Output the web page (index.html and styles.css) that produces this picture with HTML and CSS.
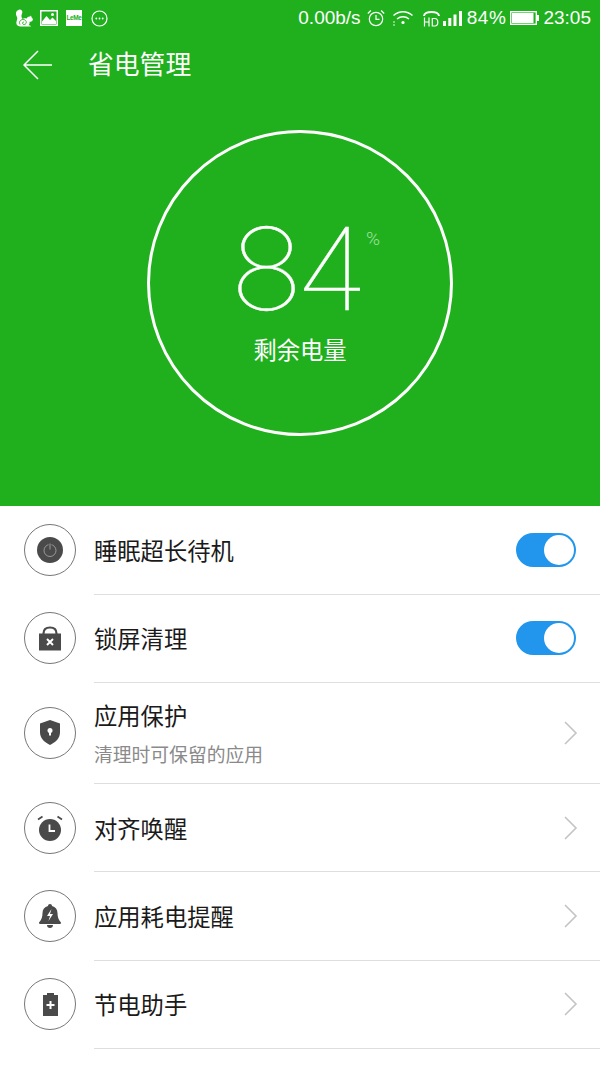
FILE: index.html
```html
<!DOCTYPE html>
<html lang="zh-CN">

<head>
    <meta charset="UTF-8">
    <meta name="viewport" content="width=device-width, initial-scale=1.0">
    <title>省电管理</title>
    <link rel="stylesheet" href="styles.css">
</head>

<body>
    <header class="hero">
        <div class="status-bar">
            <div class="status-left">
                <svg width="18" height="18" viewBox="0 0 18 18"><path fill="#fff" d="M4.500.5C2 1 .5 3 1 5.500c.3 1.600 1.300 2.500 1.300 4C2 11.500 1 12.800 1.500 15c.4 1.500 2 2.500 4 2.500H16c-.5-1-1.500-1.200-2.500-1.200 1-1 1.300-2.300 1-3.500 1.500.2 3-.5 3.300-2 .2-1-.5-1.800-1.300-2.500L16 6.500l-1 1c-1.500-.2-2.800.5-3.300 2C10 9 8.500 9.200 7.500 10 6.500 8 6 6.800 6.800 5.200 7.600 3.600 7.500 2.500 6.800 1.500 6.200.7 5.300.4 4.500.5z"/><path fill="none" stroke="#20b01e" stroke-width=".9" d="M5 15.500c-1.500-2.500.5-5 3-5s4 2 3 4c-.7 1.300-3 1.400-3.500 0-.3-1 .7-1.800 1.500-1.300"/></svg>
                <svg class="st-photo" width="18" height="16" viewBox="0 0 18 16"><path fill="#fff" fill-rule="evenodd" d="M0 0h18v16H0zM1.500 1.500v13h15v-13z"/><path fill="#fff" d="M2 14v-2.500L6.500 6l3.500 4 2.500-2.500L16 11v3z"/><circle cx="12.500" cy="4.500" r="1.500" fill="#fff"/></svg>
                <span class="st-leme">LeMe</span>
                <svg class="st-more" width="17" height="17" viewBox="0 0 17 17"><circle cx="8.500" cy="8.500" r="7.500" fill="none" stroke="#fff" stroke-width="1.200"/><circle cx="5.300" cy="8.500" r=".9" fill="#fff"/><circle cx="8.500" cy="8.500" r=".9" fill="#fff"/><circle cx="11.700" cy="8.500" r=".9" fill="#fff"/></svg>
            </div>
            <div class="status-right">
                <span class="st-text">0.00b/s</span>
                <svg class="st-alarm" width="18" height="18" viewBox="0 0 18 18"><circle cx="9" cy="10" r="6.700" fill="none" stroke="#fff" stroke-width="1.200"/><path fill="none" stroke="#fff" stroke-width="1.200" d="M9 6v4.300h3.500M.8 4.500 3.800 1.500M17.200 4.500l-3-3"/></svg>
                <svg class="st-wifi" width="20" height="16" viewBox="0 0 20 16"><path fill="none" stroke="#fff" stroke-width="1.500" d="M.5 5.500c5.500-5 13.500-5 19 0M4 9c3.500-3 8.500-3 12 0"/><circle cx="10" cy="12.500" r="1.600" fill="#fff"/><circle cx="1" cy="15" r=".8" fill="#fff"/><circle cx="1" cy="12" r=".8" fill="#fff"/></svg>
                <svg class="st-hd" width="17" height="17" viewBox="0 0 17 17"><path fill="none" stroke="#fff" stroke-width="2" d="M1 6c0-5.500 15-5.500 15 0"/><path fill="none" stroke="#fff" stroke-width="1.200" d="M1.500 7.500V16.500M6 7.500V16.500M1.500 12h4.500M9.300 8.500v7.500h2.500c4 0 4-7.500 0-7.500z"/></svg>
                <svg class="st-signal" width="19" height="15" viewBox="0 0 19 15"><path fill="#fff" d="M0 10h3v5H0zM5.300 7h3v8h-3zM10.500 3.500h3V15h-3zM16 0h3v15h-3z"/></svg>
                <span class="st-text st-pct">84%</span>
                <svg class="st-battery" width="29" height="14" viewBox="0 0 29 14"><path fill="#fff" d="M27 4h2v6h-2z"/><rect x=".7" y=".7" width="25.600" height="12.600" fill="none" stroke="#fff" stroke-width="1.400"/><rect x="2" y="2" width="21.500" height="10" fill="#fff"/></svg>
                <span class="st-text st-time">23:05</span>
            </div>
        </div>

        <div class="toolbar">
            <svg class="back" width="30" height="30" viewBox="0 0 30 30"><path fill="none" stroke="#fff" stroke-width="1.500" d="M15 1 1 15l14 14M1 15h28"/></svg>
            <h1>省电管理</h1>
        </div>

        <div class="gauge">
            <div class="gauge-num">
                <span class="num">84</span>
                <span class="pct">%</span>
            </div>
            <div class="gauge-label">剩余电量</div>
        </div>
    </header>

    <ul class="list">
        <li class="row">
            <span class="ic">
                <svg width="26" height="26" viewBox="0 0 26 26"><circle cx="13" cy="13" r="13" fill="#4a4a4a"/><circle cx="13" cy="13.500" r="6" fill="none" stroke="#9a9a9a" stroke-width="1"/><path d="M13 6v7" stroke="#4a4a4a" stroke-width="3"/><path d="M13 6.500v6" stroke="#9a9a9a" stroke-width="1"/></svg>
            </span>
            <div class="row-body">
                <span class="row-title">睡眠超长待机</span>
                <span class="toggle"><span class="knob"></span></span>
            </div>
        </li>
        <li class="row">
            <span class="ic">
                <svg width="22" height="25" viewBox="0 0 22 25"><path fill="none" stroke="#4a4a4a" stroke-width="2.200" d="M4.500 9V7.500C4.500 3.500 7 1.500 11 1.500s6.500 2 6.500 6V9"/><path fill="#4a4a4a" d="M0 7.500h22V24.500H0z"/><path stroke="#fff" stroke-width="2" d="m8 13 6 6M14 13l-6 6"/></svg>
            </span>
            <div class="row-body">
                <span class="row-title">锁屏清理</span>
                <span class="toggle"><span class="knob"></span></span>
            </div>
        </li>
        <li class="row row-tall">
            <span class="ic">
                <svg width="20" height="25" viewBox="0 0 20 25"><path fill="#4a4a4a" d="M10 0 20 3.500V12c0 6-4 10-10 13C4 22 0 18 0 12V3.500z"/><circle cx="10" cy="10.500" r="2.500" fill="#fff"/><path fill="#fff" d="M9 11h2v4.500H9z"/></svg>
            </span>
            <div class="row-body row-body-link">
                <div class="row-text">
                    <span class="row-title">应用保护</span>
                    <span class="row-sub">清理时可保留的应用</span>
                </div>
                <svg class="chev" width="14" height="24" viewBox="0 0 14 24"><path fill="none" stroke="#c4c4c4" stroke-width="1.600" d="m1 1 11 11L1 23"/></svg>
            </div>
        </li>
        <li class="row">
            <span class="ic">
                <svg width="26" height="26" viewBox="0 0 26 26"><circle cx="13" cy="15" r="11" fill="#4a4a4a"/><path fill="none" stroke="#4a4a4a" stroke-width="1.800" d="M1 4.500 5.500 1.500M25 4.500 20.500 1.500"/><path fill="none" stroke="#fff" stroke-width="1.800" d="M12.500 9.500V16H18"/></svg>
            </span>
            <div class="row-body row-body-link">
                <span class="row-title">对齐唤醒</span>
                <svg class="chev" width="14" height="24" viewBox="0 0 14 24"><path fill="none" stroke="#c4c4c4" stroke-width="1.600" d="m1 1 11 11L1 23"/></svg>
            </div>
        </li>
        <li class="row">
            <span class="ic">
                <svg width="22" height="24" viewBox="0 0 22 24"><path fill="#4a4a4a" d="M11 0c1.200 0 2 .8 2 2 3.500 1 5.500 3.500 5.500 7 0 4 1 7 3.500 9.500 0 1-.5 1.500-1.500 1.500h-19C.5 20 0 19.500 0 18.500 2.500 16 3.500 13 3.500 9c0-3.500 2-6 5.500-7 0-1.200.8-2 2-2zM8 21h6c0 1.800-1.200 3-3 3s-3-1.200-3-3z"/><path fill="#fff" d="m12.500 5-4.500 7h3l-1.500 5 4.500-7h-3z"/></svg>
            </span>
            <div class="row-body row-body-link">
                <span class="row-title">应用耗电提醒</span>
                <svg class="chev" width="14" height="24" viewBox="0 0 14 24"><path fill="none" stroke="#c4c4c4" stroke-width="1.600" d="m1 1 11 11L1 23"/></svg>
            </div>
        </li>
        <li class="row">
            <span class="ic">
                <svg width="15" height="23" viewBox="0 0 15 23"><path fill="#4a4a4a" d="M4 0h7v2h4v21H0V2h4z"/><path stroke="#fff" stroke-width="2" d="M7.500 8v8M3.500 12h8"/></svg>
            </span>
            <div class="row-body row-body-link">
                <span class="row-title">节电助手</span>
                <svg class="chev" width="14" height="24" viewBox="0 0 14 24"><path fill="none" stroke="#c4c4c4" stroke-width="1.600" d="m1 1 11 11L1 23"/></svg>
            </div>
        </li>
    </ul>
</body>

</html>
```

FILE: styles.css
```css
* {
    box-sizing: border-box;
}

html,
body {
    margin: 0;
    padding: 0;
}

body {
    width: 600px;
    height: 1066px;
    overflow: hidden;
    background-color: #fff;
    font-family: "Noto Sans CJK SC", "Liberation Sans", sans-serif;
}

.hero {
    height: 506px;
    background-color: #20b01e;
    color: #fff;
}

.status-bar {
    height: 36px;
    padding: 0 9px 0 15px;
    display: flex;
    justify-content: space-between;
    align-items: center;
}

.status-left {
    display: flex;
    align-items: center;
}

.st-photo {
    margin-left: 7px;
}

.st-leme {
    width: 16px;
    height: 16px;
    margin-left: 8px;
    background-color: #fff;
    color: #20b01e;
    font-family: "Liberation Sans", sans-serif;
    font-size: 6.500px;
    font-weight: bold;
    letter-spacing: -0.4px;
    line-height: 16px;
    text-align: center;
    white-space: nowrap;
}

.st-more {
    margin-left: 9px;
}

.status-right {
    display: flex;
    align-items: center;
}

.st-text {
    font-family: "Liberation Sans", sans-serif;
    font-size: 19px;
    line-height: 20px;
}

.st-alarm {
    margin-left: 6px;
}

.st-wifi {
    margin-left: 8px;
}

.st-hd {
    margin-left: 10px;
}

.st-signal {
    margin-left: 3px;
}

.st-pct {
    margin-left: 5px;
    letter-spacing: 0.6px;
}

.st-battery {
    margin-left: 4px;
}

.st-time {
    margin-left: 4px;
}

.toolbar {
    height: 58px;
    padding-left: 23px;
    display: flex;
    align-items: center;
}

.toolbar h1 {
    margin: 0 0 4px 35px;
    font-size: 25.800px;
    font-weight: 400;
    line-height: 34px;
}

.gauge {
    width: 306px;
    height: 306px;
    margin: 36px auto 0;
    border: 3px solid #fff;
    border-radius: 50%;
    display: flex;
    flex-direction: column;
    align-items: center;
}

.gauge-num {
    position: relative;
    margin-top: 78px;
    height: 116px;
}

.num {
    display: block;
    margin-right: 10px;
    font-family: Inter, sans-serif;
    font-weight: 100;
    font-size: 114px;
    letter-spacing: -8px;
    line-height: 116px;
    -webkit-text-stroke: 0.4px #fff;
    transform: scaleX(1.09);
}

.pct {
    position: absolute;
    left: 131px;
    top: 18px;
    font-family: Roboto, sans-serif;
    font-weight: 300;
    font-size: 19px;
    line-height: 20px;
    color: #9fe09e;
}

.gauge-label {
    margin-top: 7px;
    font-size: 23.300px;
    line-height: 30px;
}

.list {
    margin: 0;
    padding: 0.2px 0 0;
    list-style: none;
}

.row {
    height: 88.400px;
    padding-left: 24px;
    display: flex;
    align-items: center;
}

.row-tall {
    height: 101px;
}

.ic {
    width: 52px;
    height: 52px;
    flex-shrink: 0;
    margin-bottom: 1px;
    border: 1px solid #777;
    border-radius: 50%;
    display: flex;
    justify-content: center;
    align-items: center;
}

.row-body {
    height: 100%;
    flex: 1;
    margin-left: 18px;
    padding-right: 24px;
    border-bottom: 1px solid #dedede;
    display: flex;
    justify-content: space-between;
    align-items: center;
}

.row-body-link {
    padding-right: 22px;
}

.row-text {
    padding-top: 1px;
    display: flex;
    flex-direction: column;
}

.row-title {
    font-size: 23.300px;
    line-height: 32px;
    color: #1a1a1a;
}

.row-sub {
    margin-top: 10px;
    font-size: 18.800px;
    line-height: 26px;
    color: #8a8a8a;
}

.toggle {
    width: 60px;
    height: 34px;
    padding: 2px;
    border-radius: 17px;
    background-color: #2196ec;
    display: flex;
    justify-content: flex-end;
}

.knob {
    width: 30px;
    height: 30px;
    border-radius: 50%;
    background-color: #fff;
}
```
